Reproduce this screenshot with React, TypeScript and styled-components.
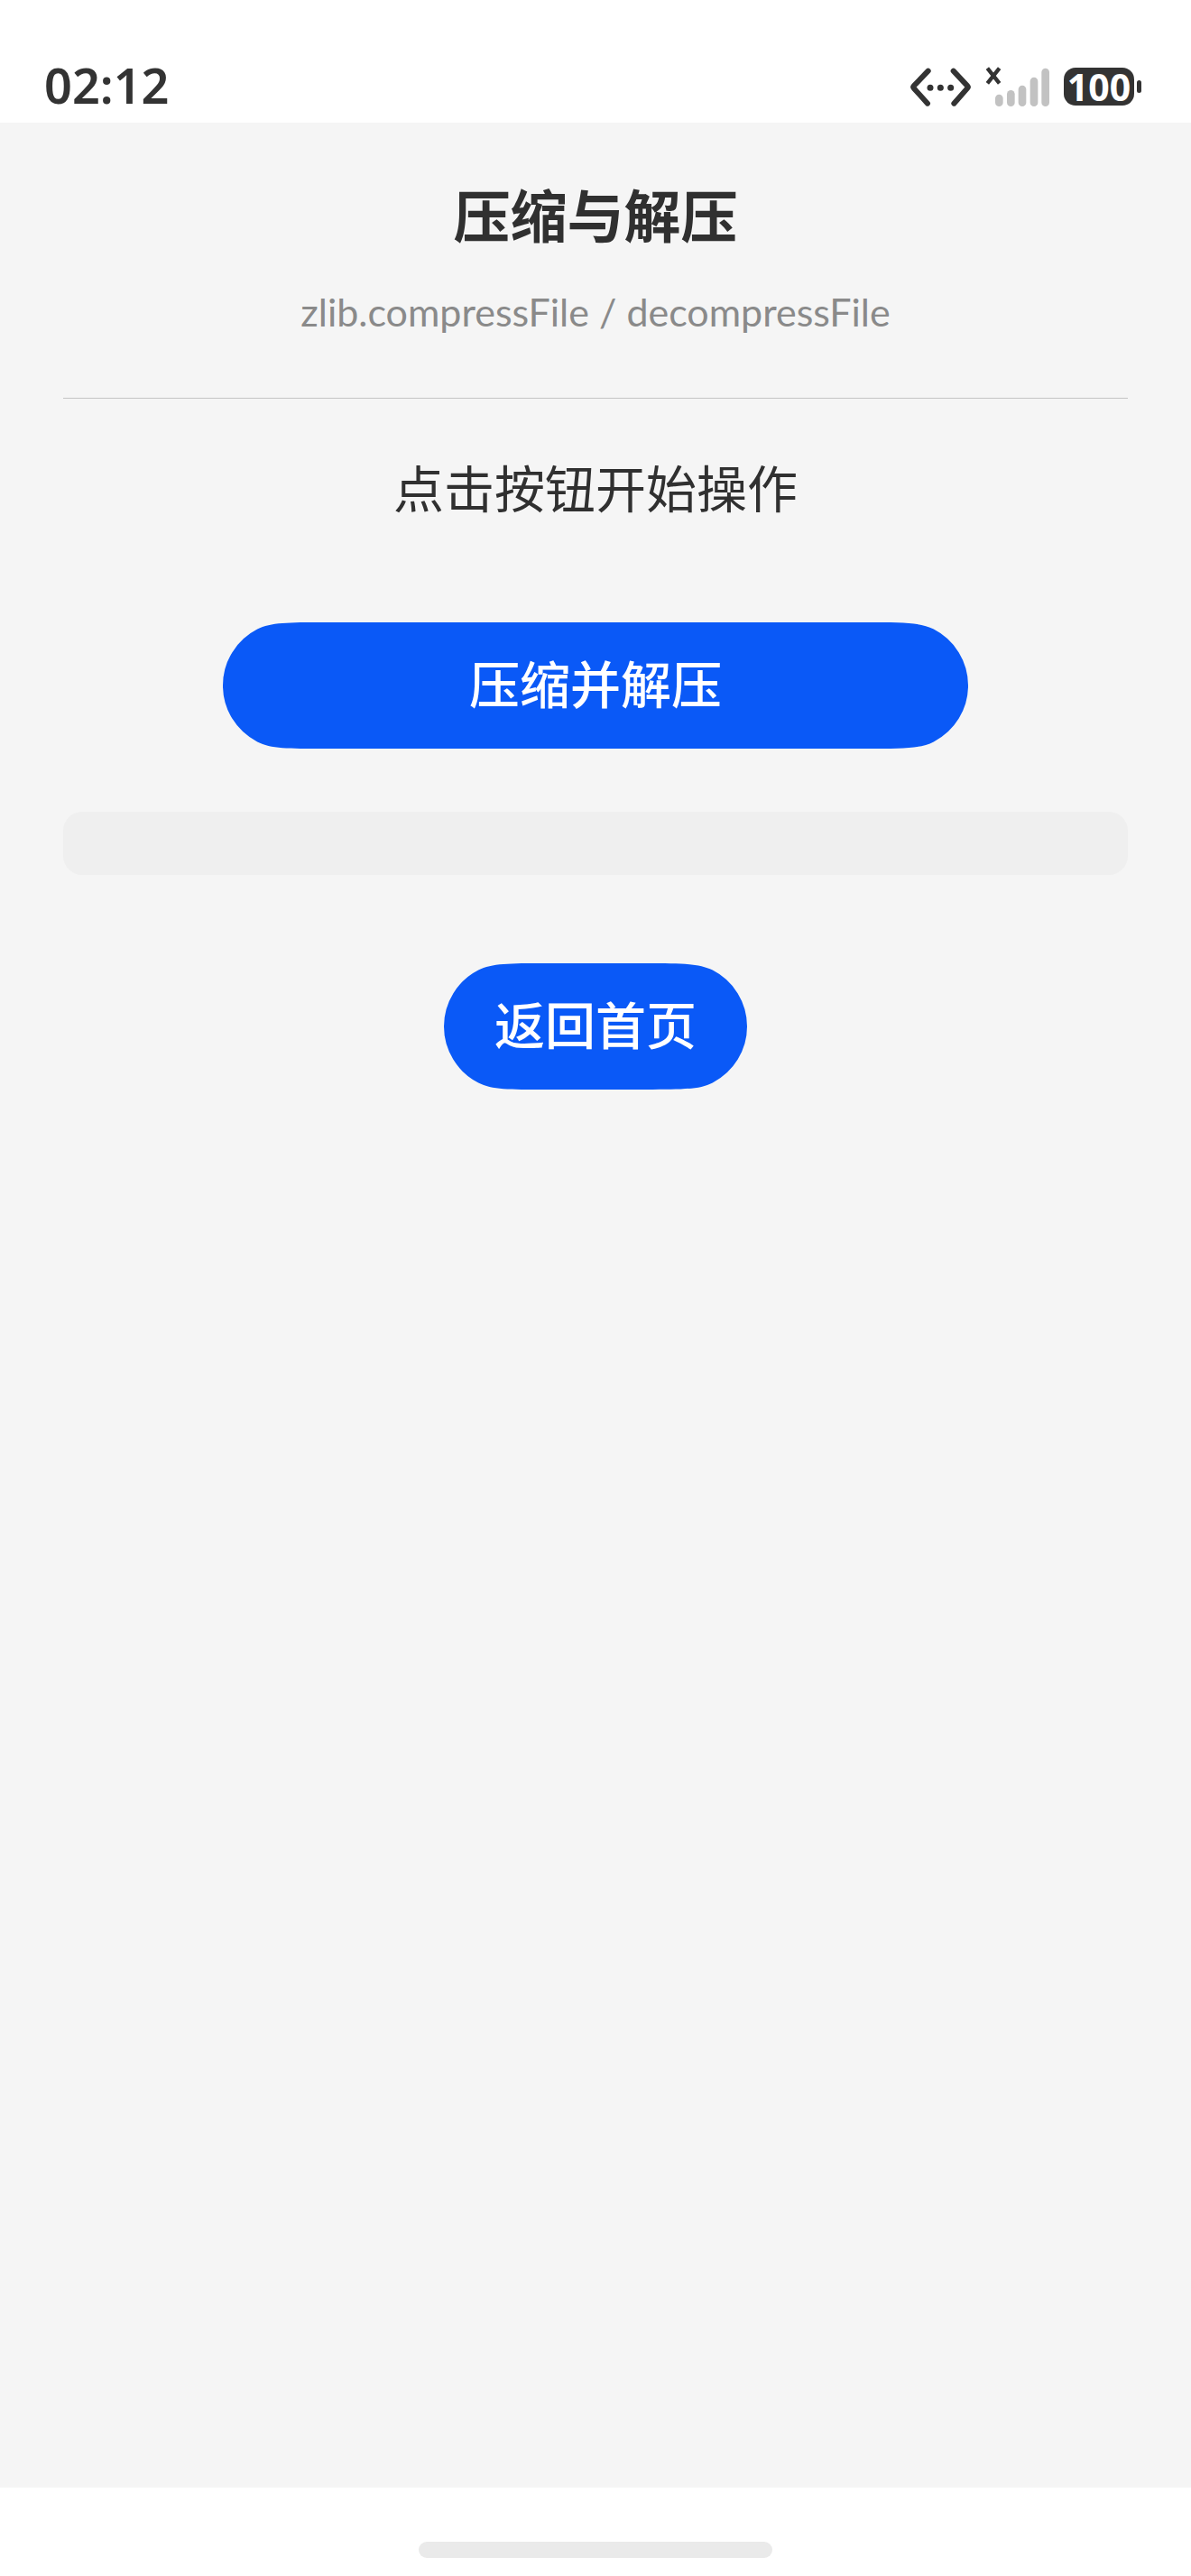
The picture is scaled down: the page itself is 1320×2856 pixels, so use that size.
import React from "react";
import styled, { createGlobalStyle } from "styled-components";

const ink = "#333333";
const blue = "#0a59f7";

const GlobalStyle = createGlobalStyle`
  * { box-sizing: border-box; }
  body {
    margin: 0;
    background: #ffffff;
    font-family: "Noto Sans", "Noto Sans CJK SC", sans-serif;
  }
`;

const Screen = styled.div`
  display: flex;
  flex-direction: column;
  min-height: 100vh;
`;

const StatusBar = styled.header`
  display: flex;
  align-items: center;
  justify-content: space-between;
  height: 136px;
  padding: 56px 55px 0 49px;
  color: ${ink};
`;

const Clock = styled.time`
  padding-bottom: 4px;
  font-size: 54px;
  line-height: 76px;
  font-weight: 600;
`;

const StatusIcons = styled.div`
  display: flex;
  align-items: center;
  gap: 15px;
  svg { display: block; }
`;

const Battery = styled.div`
  display: flex;
  align-items: center;
  gap: 3px;
`;

const BatteryLevel = styled.span`
  display: flex;
  align-items: center;
  justify-content: center;
  width: 78px;
  height: 42px;
  border-radius: 13px;
  background: ${ink};
  color: #ffffff;
  font-size: 41px;
  line-height: 42px;
  font-weight: 700;
`;

const BatteryTip = styled.span`
  width: 5px;
  height: 14px;
  border-radius: 3px;
  background: ${ink};
`;

const Page = styled.main`
  flex: 1;
  display: flex;
  flex-direction: column;
  align-items: center;
  padding: 66px 70px;
  background: #f5f5f5;
  color: #303030;
`;

const Title = styled.h1`
  margin: 0;
  font-family: "Noto Sans CJK SC", sans-serif;
  font-size: 63px;
  line-height: 68px;
  font-weight: 700;
`;

const Subtitle = styled.p`
  margin: 48px 0 0;
  color: #8a8a8a;
  font-family: Lato, sans-serif;
  font-size: 43px;
  line-height: 56px;
`;

const Divider = styled.hr`
  width: 100%;
  height: 1px;
  margin: 67px 0 65px;
  border: 0;
  background: #c4c4c4;
`;

const Status = styled.p`
  margin: 0;
  font-family: "Noto Sans CJK SC", sans-serif;
  font-size: 56px;
  line-height: 64px;
`;

const PillButton = styled.button<{ $width?: string; $top: number }>`
  position: relative;
  isolation: isolate;
  width: ${(p) => p.$width ?? "auto"};
  height: 140px;
  margin: ${(p) => p.$top}px 0 0;
  padding: 0 56px 8px;
  border: 0;
  background: none;
  color: #ffffff;
  font-family: "Noto Sans CJK SC", sans-serif;
  font-size: 56px;
  line-height: 64px;
  font-weight: 500;
  cursor: pointer;
`;

const PillSurface = styled.span`
  position: absolute;
  inset: 0;
  z-index: -1;
  display: grid;
  grid-template-columns: 112px 1fr 112px;
`;

const PillFill = styled.span`
  background: ${blue};
`;

const PillCap = styled.svg<{ $flip?: boolean }>`
  display: block;
  transform: ${(p) => (p.$flip ? "scaleX(-1)" : "none")};
`;

const ResultPanel = styled.section`
  width: 100%;
  height: 70px;
  margin-top: 70px;
  border-radius: 21px;
  background: #efefef;
`;

const HomeArea = styled.footer`
  display: flex;
  justify-content: center;
  height: 98px;
  padding-top: 60px;
`;

const HomeIndicator = styled.span`
  width: 392px;
  height: 18px;
  border-radius: 9px;
  background: #eaeaea;
`;

// Rounded end whose curve eases gradually into the straight edge.
function Cap({ flip }: { flip?: boolean }) {
  return (
    <PillCap $flip={flip} width="112" height="140" viewBox="0 0 112 140" aria-hidden="true">
      <path
        fill={blue}
        d="M112 0C72.8 0 53.2 0 38.2 7.6A70 70 0 0 0 0 70A70 70 0 0 0 38.2 132.4C53.2 140 72.8 140 112 140Z"
      />
    </PillCap>
  );
}

function Pill({ children, width, top }: { children: React.ReactNode; width?: string; top: number }) {
  return (
    <PillButton type="button" $width={width} $top={top}>
      <PillSurface>
        <Cap />
        <PillFill />
        <Cap flip />
      </PillSurface>
      {children}
    </PillButton>
  );
}

function EthernetIcon() {
  return (
    <svg width="69" height="45" viewBox="78 72 207 135" fill="none" aria-hidden="true">
      <g stroke={ink} strokeWidth="18" strokeLinecap="round" strokeLinejoin="round">
        <path d="M140 86L92 136Q89 139.500 92 143L138 194" />
        <path d="M224 86L271 136Q274 139.500 271 143L226 194" />
      </g>
      <g fill={ink}>
        <circle cx="147" cy="142" r="10.500" />
        <circle cx="181" cy="142" r="10.500" />
        <circle cx="215" cy="142" r="10.500" />
      </g>
    </svg>
  );
}

const bars = [
  { x: 363, y: 164 },
  { x: 402, y: 150 },
  { x: 440, y: 134 },
  { x: 479, y: 107 },
  { x: 517, y: 77 },
];

function NoSignalIcon() {
  return (
    <svg width="72" height="45" viewBox="330 72 216 135" aria-hidden="true">
      <path d="M337 77L377 127M377 77L337 127" stroke={ink} strokeWidth="13" />
      {bars.map((b) => (
        <rect key={b.x} x={b.x} y={b.y} width="26" height={204 - b.y} rx="13" fill="#c2c2c2" />
      ))}
    </svg>
  );
}

export default function App() {
  return (
    <Screen>
      <GlobalStyle />
      <StatusBar>
        <Clock>02:12</Clock>
        <StatusIcons>
          <EthernetIcon />
          <NoSignalIcon />
          <Battery>
            <BatteryLevel>100</BatteryLevel>
            <BatteryTip />
          </Battery>
        </StatusIcons>
      </StatusBar>
      <Page>
        <Title>压缩与解压</Title>
        <Subtitle>zlib.compressFile / decompressFile</Subtitle>
        <Divider />
        <Status>点击按钮开始操作</Status>
        <Pill width="70%" top={119}>压缩并解压</Pill>
        <ResultPanel aria-live="polite" />
        <Pill top={98}>返回首页</Pill>
      </Page>
      <HomeArea>
        <HomeIndicator />
      </HomeArea>
    </Screen>
  );
}
